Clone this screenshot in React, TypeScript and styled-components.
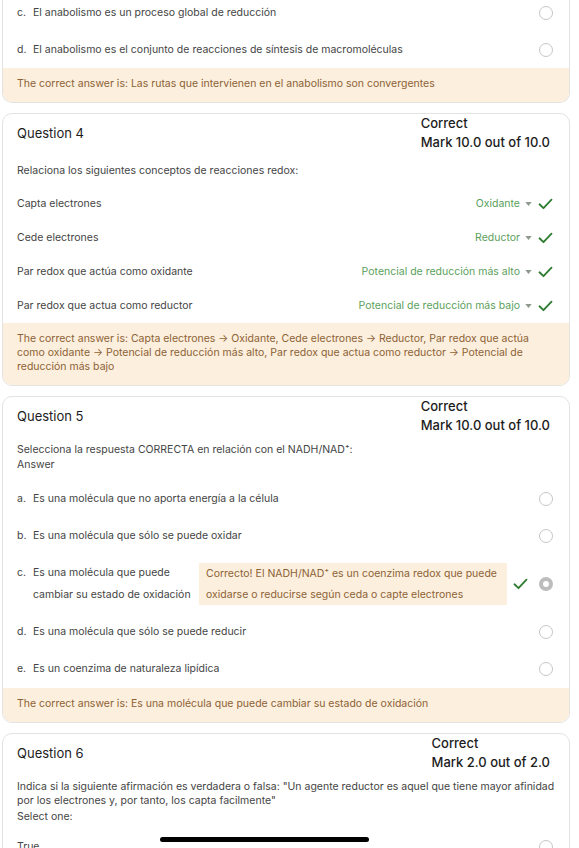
import styled, { createGlobalStyle } from 'styled-components';

const GlobalStyle = createGlobalStyle`
    body {
        margin: 0;
        background: #ffffff;
        font-family: Inter, 'Noto Sans', sans-serif;
        color: #444444;
        -webkit-font-smoothing: antialiased;
    }
`;

type Option = { letter: string; text: string; feedback?: string; selected?: boolean };

const q3Options: Option[] = [
    { letter: 'c.', text: 'El anabolismo es un proceso global de reducción' },
    { letter: 'd.', text: 'El anabolismo es el conjunto de reacciones de síntesis de macromoléculas' },
];

const q4Rows = [
    { label: 'Capta electrones', answer: 'Oxidante' },
    { label: 'Cede electrones', answer: 'Reductor' },
    { label: 'Par redox que actúa como oxidante', answer: 'Potencial de reducción más alto' },
    { label: 'Par redox que actua como reductor', answer: 'Potencial de reducción más bajo' },
];

const q5Options: Option[] = [
    { letter: 'a.', text: 'Es una molécula que no aporta energía a la célula' },
    { letter: 'b.', text: 'Es una molécula que sólo se puede oxidar' },
    {
        letter: 'c.',
        text: 'Es una molécula que puede cambiar su estado de oxidación',
        feedback:
            'Correcto! El NADH/NAD⁺ es un coenzima redox que puede oxidarse o reducirse según ceda o capte electrones',
        selected: true,
    },
    { letter: 'd.', text: 'Es una molécula que sólo se puede reducir' },
    { letter: 'e.', text: 'Es un coenzima de naturaleza lipídica' },
];

const q6Options: Option[] = [
    { letter: '', text: 'True' },
    { letter: '', text: 'False' },
];

const Check = () => (
    <CheckIcon viewBox='0 0 16 13'>
        <path d='M1.5 6.8 L5.8 11 L14.5 1.8' />
    </CheckIcon>
);

const Caret = () => (
    <CaretIcon viewBox='0 0 8 5'>
        <path d='M0 0 H8 L4 5 Z' />
    </CaretIcon>
);

const Options = ({ options }: { options: Option[] }) => (
    <>
        {options.map((opt) => (
            <OptionRow key={opt.letter + opt.text}>
                {opt.letter && <Letter>{opt.letter}</Letter>}
                <OptionContent>
                    <OptionText $narrow={!!opt.feedback}>{opt.text}</OptionText>
                    {opt.feedback && <InlineFeedback>{opt.feedback}</InlineFeedback>}
                </OptionContent>
                {opt.selected && <Check />}
                <Radio $selected={!!opt.selected} />
            </OptionRow>
        ))}
    </>
);

const QuizHeader = ({ num, mark }: { num: number; mark: string }) => (
    <Header>
        <Title>Question {num}</Title>
        <Status>
            <div>Correct</div>
            <div>{mark}</div>
        </Status>
    </Header>
);

const App = () => {
    return (
        <>
            <GlobalStyle />
            <Page>
                <Card $cut>
                    <Body>
                        <Options options={q3Options} />
                    </Body>
                    <Feedback>
                        The correct answer is: Las rutas que intervienen en el anabolismo son convergentes
                    </Feedback>
                </Card>

                <Card>
                    <Body>
                        <QuizHeader num={4} mark='Mark 10.0 out of 10.0' />
                        <QText $spaced>Relaciona los siguientes conceptos de reacciones redox:</QText>
                        <MatchList>
                            {q4Rows.map((row) => (
                                <MatchRow key={row.label}>
                                    <span>{row.label}</span>
                                    <Choice>
                                        <Selected>{row.answer}</Selected>
                                        <Caret />
                                        <Check />
                                    </Choice>
                                </MatchRow>
                            ))}
                        </MatchList>
                    </Body>
                    <Feedback>
                        The correct answer is: Capta electrones → Oxidante, Cede electrones → Reductor, Par
                        redox que actúa como oxidante → Potencial de reducción más alto, Par redox que actua
                        como reductor → Potencial de reducción más bajo
                    </Feedback>
                </Card>

                <Card>
                    <Body>
                        <QuizHeader num={5} mark='Mark 10.0 out of 10.0' />
                        <QText>
                            Selecciona la respuesta CORRECTA en relación con el NADH/NAD⁺:
                            <Prompt>Answer</Prompt>
                        </QText>
                        <OptionList>
                            <Options options={q5Options} />
                        </OptionList>
                    </Body>
                    <Feedback>
                        The correct answer is: Es una molécula que puede cambiar su estado de oxidación
                    </Feedback>
                </Card>

                <Card>
                    <Body>
                        <QuizHeader num={6} mark='Mark 2.0 out of 2.0' />
                        <QText>
                            Indica si la siguiente afirmación es verdadera o falsa: "Un agente reductor es aquel
                            que tiene mayor afinidad por los electrones y, por tanto, los capta facilmente"
                            <Prompt>Select one:</Prompt>
                        </QText>
                        <OptionList $tight>
                            <Options options={q6Options} />
                        </OptionList>
                    </Body>
                </Card>
            </Page>
            <HomeBar />
        </>
    );
};

const Page = styled.main`
    display: flex;
    flex-direction: column;
    gap: 10px;
    padding: 0 9px 60px 2px;
`;

const Card = styled.section<{ $cut?: boolean }>`
    border: 1px solid #e3e3e3;
    border-radius: 10px;
    overflow: hidden;
    background: #ffffff;
    ${(p) =>
        p.$cut &&
        `
        border-top: none;
        border-top-left-radius: 0;
        border-top-right-radius: 0;
        margin-top: -6px;
    `}
`;

const Body = styled.div`
    padding: 0 16px 0 14px;
`;

const Header = styled.div`
    display: flex;
    justify-content: space-between;
    align-items: center;
`;

const Title = styled.h3`
    margin: 0;
    font-size: 13px;
    font-weight: 400;
    color: #1c1c1c;
`;

const Status = styled.div`
    font-size: 13px;
    font-weight: 500;
    line-height: 19px;
    color: #1c1c1c;
    margin-right: 3px;
`;

const QText = styled.div<{ $spaced?: boolean }>`
    margin: ${(p) => (p.$spaced ? '12px' : '8px')} -6px 0 0;
    font-size: 10.5px;
    line-height: 14.5px;
`;

const Prompt = styled.div`
    margin-top: 1px;
`;

const MatchList = styled.div`
    margin-top: 8px;
`;

const MatchRow = styled.div`
    display: flex;
    align-items: center;
    justify-content: space-between;
    height: 34px;
    font-size: 10.5px;
`;

const Choice = styled.div`
    display: flex;
    align-items: center;
`;

const Selected = styled.span`
    color: #5c9f5c;
`;

const CaretIcon = styled.svg`
    width: 7px;
    height: 4px;
    margin-left: 5px;
    fill: #8f9a8f;
`;

const CheckIcon = styled.svg`
    width: 15px;
    height: 12px;
    margin-left: 6px;
    flex-shrink: 0;
    fill: none;
    stroke: #2e7d32;
    stroke-width: 2;
    stroke-linecap: round;
    stroke-linejoin: round;
`;

const OptionList = styled.div<{ $tight?: boolean }>`
    margin-top: ${(p) => (p.$tight ? '4px' : '8px')};
`;

const OptionRow = styled.div`
    display: flex;
    align-items: center;
    padding: 7.5px 0;
    font-size: 10.5px;
    line-height: 22px;
`;

const Letter = styled.span`
    width: 16px;
    flex-shrink: 0;
    align-self: flex-start;
`;

const OptionContent = styled.div`
    flex: 1;
    display: flex;
    align-items: center;
    gap: 2px;
`;

const OptionText = styled.span<{ $narrow: boolean }>`
    ${(p) => p.$narrow && 'flex: 0 0 164px;'}
`;

const InlineFeedback = styled.span`
    flex: 1;
    padding: 0 5px 0 7px;
    background: #fcefdd;
    color: #8c6236;
    line-height: 21px;
`;

const Radio = styled.span<{ $selected: boolean }>`
    width: 14px;
    height: 14px;
    box-sizing: border-box;
    border-radius: 50%;
    flex-shrink: 0;
    margin-left: 11px;
    border: ${(p) => (p.$selected ? '4px solid #bdbdbd' : '1px solid #c6c6c6')};
    background: #ffffff;
`;

const Feedback = styled.div`
    background: #fcefdd;
    color: #8c6236;
    font-size: 10.5px;
    line-height: 14px;
    padding: 9px 14px 11px;
`;

const HomeBar = styled.div`
    position: fixed;
    left: 160px;
    bottom: 6px;
    width: 209px;
    height: 5px;
    border-radius: 3px;
    background: #000000;
`;

export default App;
